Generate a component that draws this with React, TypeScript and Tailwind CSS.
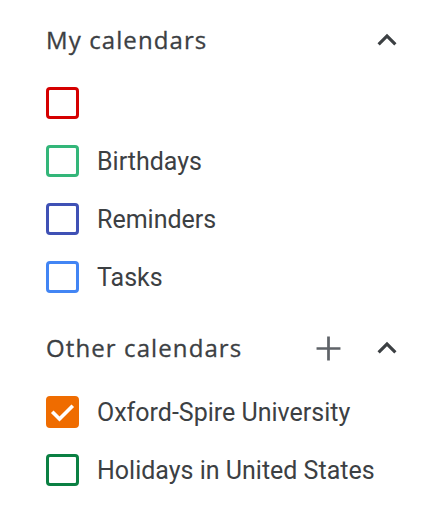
import React from "react";

const Box = ({ color, checked }: { color: string; checked?: boolean }) => (
  <div
    className="w-[33px] h-[32px] rounded-[4px] border-[3px] shrink-0 relative"
    style={{ borderColor: color, backgroundColor: checked ? color : "transparent" }}
  >
    {checked && (
      <svg className="absolute left-[-3px] top-[-3px]" width="33" height="32" viewBox="0 0 33 32">
        <polyline points="7.5,17 13.5,23 25.5,11" fill="none" stroke="#fff" strokeWidth="3.6" strokeLinecap="square" />
      </svg>
    )}
  </div>
);

const Row = ({ color, label, checked }: { color: string; label: string; checked?: boolean }) => (
  <div className="h-[58px] flex items-center">
    <Box color={color} checked={checked} />
    <span className="ml-[18px] text-[25px] text-[#3c4043] leading-none" style={{ fontFamily: "Roboto, sans-serif" }}>
      {label}
    </span>
  </div>
);

const Chevron = () => (
  <svg width="38" height="38" viewBox="0 0 24 24" className="shrink-0">
    <path d="M12 8l-6 6 1.41 1.41L12 10.83l4.59 4.58L18 14z" fill="#3c4043" />
  </svg>
);

const Plus = () => (
  <svg width="41" height="41" viewBox="0 0 24 24" className="shrink-0">
    <path d="M19 12.8h-6.2V19h-1.6v-6.2H5v-1.6h6.2V5h1.6v6.2H19z" fill="#5f6368" />
  </svg>
);

export default function App() {
  return (
    <div className="w-[436px] h-[512px] bg-white pl-[46px] pr-[30px] pt-[11px]">
      <div className="h-[58px] flex items-center justify-between">
        <span
          className="text-[24px] text-[#3c4043] font-medium tracking-[1.1px] leading-none"
          style={{ fontFamily: '"Open Sans", sans-serif', WebkitTextStroke: "0.3px #3c4043" }}
        >
          My calendars
        </span>
        <Chevron />
      </div>
      <div className="mt-[5px]">
        <Row color="#d50000" label="" />
        <Row color="#33b679" label="Birthdays" />
        <Row color="#3f51b5" label="Reminders" />
        <Row color="#4285f4" label="Tasks" />
      </div>
      <div className="mt-[13px] h-[58px] flex items-center">
        <span
          className="flex-1 text-[24px] text-[#3c4043] font-medium tracking-[1.1px] leading-none"
          style={{ fontFamily: '"Open Sans", sans-serif', WebkitTextStroke: "0.3px #3c4043" }}
        >
          Other calendars
        </span>
        <Plus />
        <div className="w-[19px]" />
        <Chevron />
      </div>
      <div className="mt-[6px]">
        <Row color="#ef6c00" label="Oxford-Spire University" checked />
        <Row color="#0b8043" label="Holidays in United States" />
      </div>
    </div>
  );
}
